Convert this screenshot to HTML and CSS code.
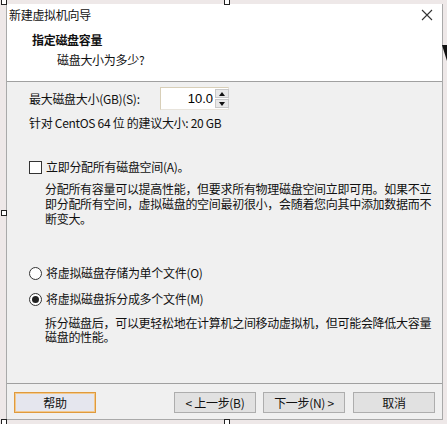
FILE: index.html
```html
<!DOCTYPE html>
<html lang="zh-CN">
<head>
  <meta charset="UTF-8">
  <meta name="viewport" content="width=device-width, initial-scale=1.0">
  <title>新建虚拟机向导</title>
  <link rel="stylesheet" href="styles.css">
</head>
<body>
  <div class="window">
    <div class="header">
      <div class="titlebar">
        <span class="title">新建虚拟机向导</span>
        <svg class="close" width="12" height="12" viewBox="0 0 12 12">
          <path d="M1 1 L11 11 M11 1 L1 11" stroke="#333" stroke-width="1.1" fill="none"/>
        </svg>
      </div>
      <div class="heading">指定磁盘容量</div>
      <div class="subheading">磁盘大小为多少?</div>
    </div>

    <div class="content">
      <div class="size-row">
        <label for="size">最大磁盘大小(GB)(S):</label>
        <div class="spin">
          <input type="text" id="size" class="spin-input" value="10.0">
          <div class="spin-buttons">
            <span class="spin-btn"><i class="arrow-up"></i></span>
            <span class="spin-btn"><i class="arrow-down"></i></span>
          </div>
        </div>
      </div>
      <div class="hint">针对 CentOS 64 位 的建议大小: 20 GB</div>

      <div class="option check-option">
        <span class="checkbox"></span>
        <span>立即分配所有磁盘空间(A)。</span>
      </div>
      <p class="desc desc-alloc">分配所有容量可以提高性能，但要求所有物理磁盘空间立即可用。如果不立即分配所有空间，虚拟磁盘的空间最初很小，会随着您向其中添加数据而不断变大。</p>

      <div class="option radio-first">
        <span class="radio"></span>
        <span>将虚拟磁盘存储为单个文件(O)</span>
      </div>
      <div class="option radio-second">
        <span class="radio checked"></span>
        <span>将虚拟磁盘拆分成多个文件(M)</span>
      </div>
      <p class="desc desc-split">拆分磁盘后，可以更轻松地在计算机之间移动虚拟机，但可能会降低大容量磁盘的性能。</p>
    </div>

    <div class="footer">
      <button class="btn btn-help">帮助</button>
      <div class="nav-buttons">
        <button class="btn">&lt; 上一步(B)</button>
        <button class="btn">下一步(N) &gt;</button>
        <button class="btn btn-cancel">取消</button>
      </div>
    </div>
  </div>

  <span class="handle h-tl"></span>
  <span class="handle h-tm"></span>
  <span class="handle h-ml"></span>
  <span class="handle h-bl"></span>
  <span class="handle h-bm"></span>
  <svg class="edge-mark" width="5" height="16" viewBox="0 0 5 16">
    <polygon points="0,0 5,0 5,16" fill="#111"/>
  </svg>
</body>
</html>
```

FILE: styles.css
```css
body {
  margin: 0;
  padding: 0;
  background-color: #eee8e8;
  font-family: "Noto Sans CJK SC", "Liberation Sans", sans-serif;
  font-size: 12px;
  letter-spacing: -0.3px;
  color: #111;
  width: 447px;
  height: 424px;
  overflow: hidden;
  position: relative;
}

.window {
  margin: 4px 0 0 6px;
  width: 437px;
  height: 416px;
  box-sizing: border-box;
  border-left: 1px solid #a9a9a9;
  border-right: 1px solid #a9a9a9;
  border-bottom: 1px solid #a9a9a9;
  background-color: #f0f0f0;
  display: flex;
  flex-direction: column;
}

.header {
  background-color: #fff;
  height: 78px;
  box-sizing: border-box;
  border-bottom: 1px solid #a0a0a0;
}

.titlebar {
  height: 21px;
  display: flex;
  align-items: center;
  justify-content: space-between;
  padding: 0 9px 0 2px;
  line-height: 16px;
}

.close {
  display: block;
  margin-top: 1px;
}

.heading {
  font-weight: bold;
  margin: 7px 0 0 25px;
  line-height: 16px;
}

.subheading {
  margin: 4px 0 0 50px;
  line-height: 16px;
}

.content {
  flex: 1;
  padding-left: 22px;
}

.size-row {
  display: flex;
  align-items: center;
  margin-top: 5px;
  height: 23px;
}

.size-row label {
  width: 131px;
}

.spin {
  display: flex;
  height: 23px;
  width: 69px;
  box-sizing: border-box;
  border: 1px solid #d8cfb8;
  border-right-color: #e8e4dc;
  border-bottom-color: #e8e4dc;
  background-color: #fff;
}

.spin-input {
  width: 52px;
  border: none;
  outline: none;
  padding: 0 2px 0 0;
  text-align: right;
  font-family: "Liberation Sans", sans-serif;
  font-size: 13px;
  color: #000;
  background: transparent;
}

.spin-buttons {
  display: flex;
  flex-direction: column;
  padding: 1px 0;
  gap: 1px;
}

.spin-btn {
  width: 14px;
  flex: 1;
  background-color: #e8e8e8;
  border: 1px solid #c8c8c8;
  box-sizing: border-box;
  display: flex;
  align-items: center;
  justify-content: center;
}

.arrow-up {
  border-left: 3px solid transparent;
  border-right: 3px solid transparent;
  border-bottom: 4px solid #111;
}

.arrow-down {
  border-left: 3px solid transparent;
  border-right: 3px solid transparent;
  border-top: 4px solid #111;
}

.hint {
  margin-top: 5px;
  line-height: 16px;
}

.option {
  display: flex;
  align-items: center;
  line-height: 16px;
  gap: 4px;
}

.check-option {
  margin-top: 28px;
}

.checkbox {
  width: 13px;
  height: 13px;
  box-sizing: border-box;
  border: 1px solid #333;
  background-color: #fff;
}

.radio {
  width: 13px;
  height: 13px;
  box-sizing: border-box;
  border: 1px solid #333;
  border-radius: 50%;
  background-color: #fff;
  display: flex;
  align-items: center;
  justify-content: center;
}

.radio.checked::after {
  content: "";
  width: 7px;
  height: 7px;
  border-radius: 50%;
  background-color: #222;
}

.desc {
  margin: 0 0 0 16px;
  width: 392px;
}

.desc-alloc {
  margin-top: 6px;
  line-height: 15px;
}

.radio-first {
  margin-top: 39px;
}

.radio-second {
  margin-top: 10px;
}

.desc-split {
  margin-top: 9px;
  line-height: 14px;
}

.footer {
  height: 36px;
  box-sizing: border-box;
  border-top: 1px solid #a0a0a0;
  display: flex;
  justify-content: space-between;
  align-items: flex-start;
  padding: 8px 7px 0 7px;
}

.nav-buttons {
  display: flex;
  gap: 7px;
}

.btn {
  width: 82px;
  height: 21px;
  padding: 0;
  background-color: #e1e1e1;
  border: 1px solid #adadad;
  font-family: "Noto Sans CJK SC", "Liberation Sans", sans-serif;
  font-size: 12px;
  letter-spacing: -0.3px;
  color: #111;
  line-height: 16px;
}

.btn-help {
  background-color: #e5e6ee;
  border: 1px solid #e09a3c;
  box-shadow: inset 0 0 0 1px #f2c98e;
}

.btn-cancel {
  margin-left: 1px;
}

.handle {
  position: absolute;
  width: 4px;
  height: 4px;
  border: 1px solid #222;
  background-color: #fff;
}

.h-tl { left: 1px; top: -1px; }
.h-tm { left: 224px; top: -1px; }
.h-ml { left: 1px; top: 210px; }
.h-bl { left: 1px; top: 419px; }
.h-bm { left: 224px; top: 419px; }

.edge-mark {
  position: absolute;
  left: 442px;
  top: 45px;
}
```
